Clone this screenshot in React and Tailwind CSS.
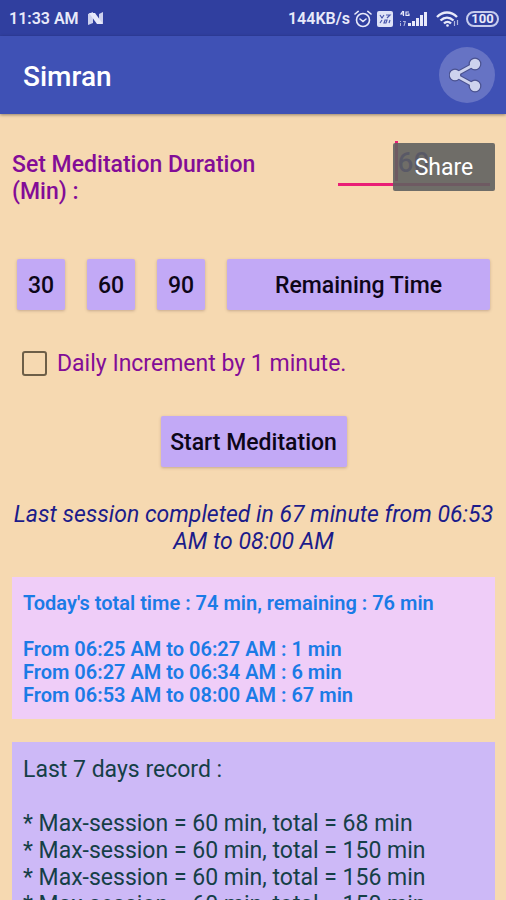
import { useState } from "react";

const presets = [30, 60, 90];

const sessions = [
  { from: "06:25 AM", to: "06:27 AM", minutes: 1 },
  { from: "06:27 AM", to: "06:34 AM", minutes: 6 },
  { from: "06:53 AM", to: "08:00 AM", minutes: 67 },
];

const records = [
  { id: 1, max: 60, total: 68 },
  { id: 2, max: 60, total: 150 },
  { id: 3, max: 60, total: 156 },
  { id: 4, max: 60, total: 150 },
];

const StatusBar = () => (
  <div className="flex h-9 shrink-0 items-center justify-between bg-[#303f9f] pl-[9px] pr-[7px] pt-px text-base font-semibold text-[#e8eafa]">
    <div className="flex items-center gap-2">
      <span>11:33 AM</span>
      <svg className="h-4 w-[18px]" viewBox="0 0 18 16" fill="currentColor">
        <path d="M1 3l5-2v11l-5 2z" opacity=".85" />
        <path d="M2 2h6l8 11h-6z" />
        <path d="M12 3l4-2v12l-4-2z" opacity=".85" />
      </svg>
    </div>

    <div className="flex items-center gap-1">
      <span>144KB/s</span>
      {/* Alarm */}
      <svg
        className="h-[18px] w-[18px]"
        viewBox="0 0 18 18"
        fill="none"
        stroke="currentColor"
        strokeWidth="1.6"
        strokeLinecap="round"
      >
        <circle cx="9" cy="10" r="6.5" />
        <path d="M6 9l3 2.5L12 9M1 4l3.2-2.6M17 4l-3.2-2.6" />
      </svg>
      {/* VoLTE */}
      <svg className="h-4 w-[18px]" viewBox="0 0 18 16">
        <rect x="1" y="0" width="16" height="16" rx="2" fill="#dfe3f8" />
        <path
          d="M4 4l2 3L8 4M10 4h4l-3 3M4 12l2-3M8 12l1-3h2l-1 3zM13 12l1-3"
          fill="none"
          stroke="#4a58ad"
          strokeWidth="1.2"
        />
      </svg>
      {/* Mobile signal */}
      <svg className="h-[18px] w-[30px]" viewBox="0 0 30 18" fill="currentColor">
        <path
          d="M5 1L3 4h3M5.500 1v5M11 2H8v3.500h3V4H9.500"
          fill="none"
          stroke="currentColor"
          strokeWidth="1.2"
        />
        <path d="M2 11h1v1H2zM2 13h1v3H2zM5 11h3l-1.500 5H5.500l1-4H5z" opacity=".7" />
        <path d="M10 13h3v3h-3zM14 11h3v5h-3zM18 8h3v8h-3zM22 5h3v11h-3zM26 2h3v14h-3z" />
      </svg>
      {/* Wifi */}
      <svg
        className="ml-1 h-[18px] w-6"
        viewBox="0 0 24 18"
        fill="none"
        stroke="currentColor"
        strokeWidth="2.4"
      >
        <path d="M1 7C7 1 15 1 21 7M4.500 10.500c4-3.800 9-3.800 13 0M8 13.500c2-2 5-2 7 0" />
        <circle cx="11.500" cy="15.500" r="1.300" fill="currentColor" stroke="none" />
        <path d="M18.500 11v5M21.500 10v5" strokeWidth="1.2" opacity=".7" />
      </svg>
      <span className="ml-0.5 flex h-4 w-[33px] items-center justify-center rounded-full border-2 border-[#c5cbed] text-[13px] font-bold">
        100
      </span>
    </div>
  </div>
);

const ShareIcon = () => (
  <svg className="h-9 w-9" viewBox="0 0 36 36">
    <g stroke="#4a5290" strokeWidth="5" fill="none">
      <path d="M26 7L6 18l20 11" />
    </g>
    <g fill="#ced3ee" stroke="#4a5290" strokeWidth="1.2">
      <circle cx="26" cy="7" r="5.800" />
      <circle cx="6" cy="18" r="5.800" />
      <circle cx="26" cy="29" r="5.800" />
    </g>
    <path d="M26 7L6 18l20 11" stroke="#ced3ee" strokeWidth="3" fill="none" />
  </svg>
);

const Button = ({ children, className = "", ...props }) => (
  <button
    type="button"
    className={`h-[51px] rounded-xs bg-[#c2a9f6] pt-[3px] text-[23px] font-medium text-[#0d0618] shadow-[0_1px_3px_rgba(90,60,60,0.3)] ${className}`}
    {...props}
  >
    {children}
  </button>
);

export default function App() {
  const [duration, setDuration] = useState("60");
  const [increment, setIncrement] = useState(false);

  return (
    <div className="flex h-screen flex-col overflow-hidden bg-[#f6d9b1] font-[Roboto,sans-serif]">
      <StatusBar />

      {/* App bar */}
      <header className="relative z-10 flex h-[78px] shrink-0 items-center justify-between bg-[#3f51b5] pl-[23px] pr-[11px] shadow-[0_1px_3px_rgba(0,0,0,0.4)]">
        <h1 className="pt-1 text-[28px] font-medium text-white">Simran</h1>
        <div className="relative">
          <button
            type="button"
            aria-label="Share"
            className="flex h-14 w-14 items-center justify-center rounded-full bg-[#6673c4]"
          >
            <ShareIcon />
          </button>
          <div
            role="tooltip"
            className="absolute right-0 top-24 flex h-12 w-[102px] items-center justify-center rounded-xs bg-[#616161]/90 pt-[3px] text-[23px] text-white"
          >
            Share
          </div>
        </div>
      </header>

      <main className="flex-1 overflow-y-auto pl-3 pr-[11px] pt-[27px] [scrollbar-width:none]">
        <div className="flex items-start justify-between pr-[5px]">
          <label
            htmlFor="duration"
            className="w-64 pt-[10px] text-[23px] font-medium leading-[27px] text-[#830c97]"
          >
            Set Meditation Duration (Min) :
          </label>
          <div className="flex h-[45px] w-[152px] justify-center border-b-[3px] border-[#e91e76]">
            <span className="h-10 w-[3px] bg-[#e91e76]" />
            <input
              id="duration"
              inputMode="numeric"
              className="h-10 w-9 bg-transparent pt-[3px] text-[28px] font-medium text-[#1a1a9c] outline-none"
              value={duration}
              onChange={(e) => setDuration(e.target.value)}
            />
          </div>
        </div>

        <div className="mt-[54px] flex gap-[22px] px-[5px]">
          {presets.map((minutes) => (
            <Button
              key={minutes}
              className="w-12 shrink-0"
              onClick={() => setDuration(String(minutes))}
            >
              {minutes}
            </Button>
          ))}
          <Button className="flex-1">Remaining Time</Button>
        </div>

        <label className="mt-10 flex items-center gap-[10px] pl-[10px] text-[23px] leading-[27px] text-[#830c97]">
          <input
            type="checkbox"
            checked={increment}
            onChange={(e) => setIncrement(e.target.checked)}
            className="h-[25px] w-[25px] appearance-none rounded-[3px] border-2 border-[#6d5f48] checked:bg-[#e91e76]"
          />
          Daily Increment by 1 minute.
        </label>

        <div className="mt-[39px] flex justify-center">
          <Button className="w-[186px]">Start Meditation</Button>
        </div>

        <p className="mt-[34px] text-center text-[23px] italic leading-[27px] text-[#1c1c8a]">
          Last session completed in 67 minute from 06:53 AM to 08:00 AM
        </p>

        {/* Today */}
        <section className="mt-[22px] bg-[#efcdf8] px-[11px] pb-3 pt-[15px] text-[20px] font-semibold leading-[23px] text-[#1b7be6]">
          <p>Today's total time : 74 min, remaining : 76 min</p>
          <ul className="mt-[23px]">
            {sessions.map((s) => (
              <li key={s.from}>
                From {s.from} to {s.to} : {s.minutes} min
              </li>
            ))}
          </ul>
        </section>

        {/* Weekly record */}
        <section className="mt-[23px] bg-[#cdb9f7] px-[11px] py-[14px] text-[23px] leading-[27px] text-[#153f47]">
          <h2>Last 7 days record :</h2>
          <ul className="mt-[27px]">
            {records.map((r) => (
              <li key={r.id}>
                * Max-session = {r.max} min, total = {r.total} min
              </li>
            ))}
          </ul>
        </section>
      </main>
    </div>
  );
}
